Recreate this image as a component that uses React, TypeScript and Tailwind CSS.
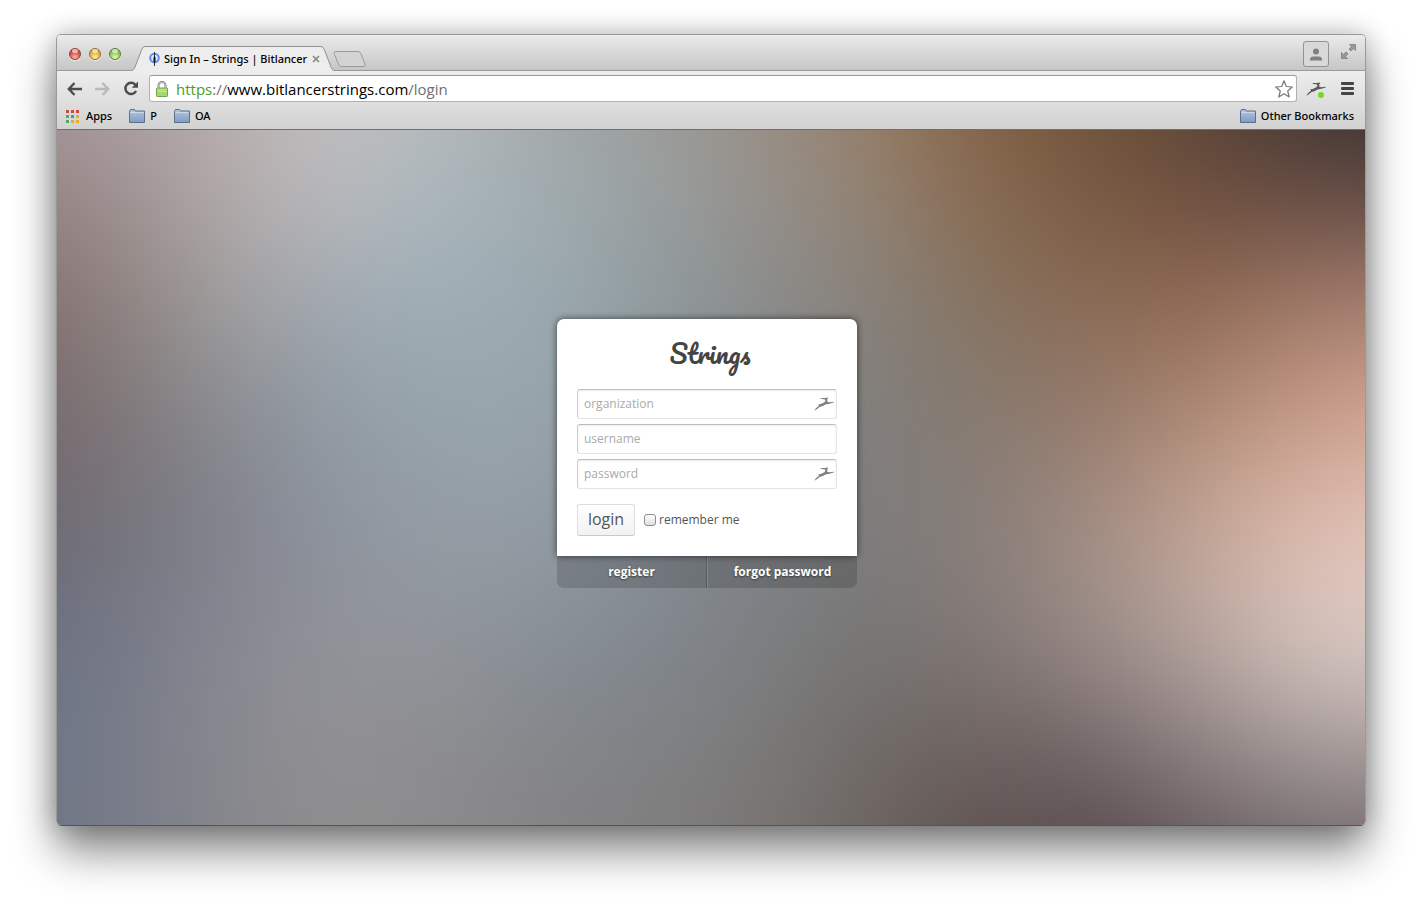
import React from "react";

const backdrop: string[][] = [
  ["#a79b9c", "#ac9fa0", "#bcb0b0", "#c2c0c1", "#b8bdbe", "#a3a8a7", "#9b9b97", "#9a8e83", "#957a62", "#815f43", "#6c5139", "#564334", "#372f30", "#302a2d"],
  ["#958284", "#9e9090", "#b2a9a9", "#bbbbbd", "#abb7bc", "#a1acb0", "#999fa0", "#95908b", "#938270", "#88694f", "#775940", "#6c4d3e", "#624a40", "#5c4643"],
  ["#826c6d", "#8b7f7c", "#9f9d9c", "#a1a9b2", "#9dadb6", "#9aa9b0", "#8f9a9e", "#898b8a", "#87817a", "#857360", "#8a6a55", "#906a54", "#a17a69", "#aa8273"],
  ["#75666a", "#7d7475", "#888a90", "#919ba4", "#97a4ab", "#98a4ab", "#8d969b", "#83878a", "#807d7b", "#867a70", "#967b6d", "#b08d77", "#cb9e8b", "#d6a999"],
  ["#6a6672", "#73727a", "#80818c", "#8d939d", "#949ca5", "#929ba3", "#888f97", "#7d8186", "#7d7c7b", "#8a7f7a", "#a38f84", "#c6a799", "#dfbfb3", "#e6c9bf"],
  ["#697084", "#747987", "#868791", "#929399", "#919499", "#868e96", "#80868d", "#7c7e80", "#757472", "#817775", "#978987", "#b4a49e", "#d4c5bf", "#dccdc8"],
  ["#6d7586", "#777b88", "#88898d", "#918f92", "#8c8c8e", "#838587", "#808182", "#7a7876", "#6e6763", "#695d5b", "#6d6163", "#857a7c", "#9c9292", "#9f9494"],
  ["#6f7485", "#747888", "#84858c", "#8d8c8c", "#8b898a", "#858184", "#807c7e", "#777370", "#6a625f", "#5a4e4e", "#524447", "#5d5155", "#675c60", "#675b5f"],
];

function Backdrop() {
  return (
    <svg className="absolute inset-0 h-full w-full" viewBox="0 0 1200 600" preserveAspectRatio="none" aria-hidden="true">
      <defs>
        <filter id="soften" filterUnits="userSpaceOnUse" x="-200" y="-200" width="1600" height="1000" colorInterpolationFilters="sRGB">
          <feGaussianBlur stdDeviation="50" />
        </filter>
      </defs>
      <g filter="url(#soften)" shapeRendering="crispEdges">
        {backdrop.map((row, r) =>
          row.map((fill, c) => {
            const left = c === 0 ? -200 : c * 100 - 100;
            const right = c === 13 ? 1400 : c * 100;
            const top = r === 0 ? -200 : r * 100 - 100;
            const bottom = r === 7 ? 800 : r * 100;
            return <rect key={`${r}-${c}`} x={left} y={top} width={right - left} height={bottom - top} fill={fill} />;
          }),
        )}
      </g>
    </svg>
  );
}

function Folder() {
  return (
    <svg width="16" height="14" viewBox="0 0 16 14" aria-hidden="true">
      <defs>
        <linearGradient id="folder" x1="0" y1="0" x2="0" y2="1">
          <stop offset="0" stopColor="#b4c7e0" />
          <stop offset="1" stopColor="#7f9cc4" />
        </linearGradient>
      </defs>
      <path d="M.5 13.5V2.2L1.5.5h4l1 1.5h9v11.5z" fill="url(#folder)" stroke="#5d6f8a" />
      <path d="M1.2 3.5h13.6" stroke="#cfdcec" strokeWidth=".9" />
    </svg>
  );
}

function Bird({ size, fill }: { size: number; fill: string }) {
  return (
    <svg width={size} height={size * 0.7} viewBox="0 0 20 14" aria-hidden="true">
      <path
        d="M.3 13.8 1.9 11.2 5.2 8.4 4.4 8 4.6 7.3 6.8 7 10.4 5.2 11.4 3.6 10.9 2.4 6.6 1.7 6.8 1 11 .9 13.6.4 14.3 1.2 13.2 2.2 13.4 4.8 15.1 5.2 19.8 4.7 19.7 5.4 15.4 6.7 11.6 7.6 8.4 9.2 5.6 10 2.5 12.4z"
        fill={fill}
      />
    </svg>
  );
}

function Lock() {
  return (
    <svg width="12" height="16" viewBox="0 0 12 16" aria-hidden="true">
      <path d="M2.5 8V4.5a3.5 3.5 0 0 1 7 0V8" fill="none" stroke="#777" strokeWidth="2" />
      <path d="M2.5 8V4.5a3.5 3.5 0 0 1 7 0V8" fill="none" stroke="#ddd" strokeWidth=".8" />
      <rect x=".5" y="7" width="11" height="8.5" rx=".8" fill="#a5d86c" stroke="#6fa548" />
      <path d="M1.5 8.5h9M1.5 10.5h9" stroke="#c4ea96" />
    </svg>
  );
}

function Apps() {
  const colors = ["#d0483c", "#d0483c", "#d0483c", "#58a55c", "#4a86e8", "#e8b020", "#58a55c", "#e8b020", "#e8b020"];
  return (
    <svg width="13" height="13" viewBox="0 0 13 13" aria-hidden="true">
      {colors.map((c, i) => (
        <rect key={i} x={(i % 3) * 5} y={Math.floor(i / 3) * 5} width="3" height="3" fill={c} />
      ))}
    </svg>
  );
}

function Field({ id, label, type, bird }: { id: string; label: string; type: string; bird?: boolean }) {
  return (
    <div className="relative">
      <input
        id={id}
        type={type}
        aria-label={label}
        placeholder={label}
        className="block h-[30px] w-full rounded-[3px] border border-[#e4e4e4] border-t-[#bdbdbd] border-l-[#cfcfcf] bg-white px-1.5 pb-0.5 text-xs text-[#555] shadow-[inset_0_1px_2px_rgba(0,0,0,0.08)] outline-none placeholder:text-[#aaa]"
      />
      {bird && (
        <span className="absolute top-2 right-[3px]">
          <Bird size={20} fill="#828282" />
        </span>
      )}
    </div>
  );
}

const lights = [
  { name: "Close", cls: "border-[#8d3f38] bg-[radial-gradient(circle_at_50%_85%,#ffb4a6_0%,#d9554a_55%,#a93a33_100%)]" },
  { name: "Minimize", cls: "border-[#93702c] bg-[radial-gradient(circle_at_50%_85%,#fff0a0_0%,#e5b03c_55%,#b5842b_100%)]" },
  { name: "Zoom", cls: "border-[#56803a] bg-[radial-gradient(circle_at_50%_85%,#e0ffb0_0%,#93c75c_55%,#5f9440_100%)]" },
];

export default function App() {
  return (
    <div className="flex min-h-screen flex-col bg-white px-14 pt-[34px] pb-[78px] font-['Open_Sans',sans-serif]">
      <div className="flex flex-1 flex-col overflow-hidden rounded-[5px] border border-[#999] border-b-[#555] shadow-[0_25px_44px_rgba(0,0,0,0.48),0_0_26px_rgba(0,0,0,0.24)]">
        <header className="font-['Noto_Sans',sans-serif] text-black">
          <div className="flex h-9 items-end border-b border-[#999] bg-linear-to-b from-[#ebebeb] to-[#c6c6c6] pl-3">
            <div className="flex gap-2 pb-2.5">
              {lights.map((l) => (
                <button key={l.name} aria-label={l.name} className={`relative size-3 rounded-full border shadow-[0_1px_0_rgba(255,255,255,0.6)] ${l.cls}`}>
                  <span className="absolute inset-x-0.5 top-0 h-1 rounded-full bg-white/60" />
                </button>
              ))}
            </div>
            <div className="-mb-px ml-2.5 flex h-[25px] items-stretch">
              <svg width="14" height="25" viewBox="0 0 14 25" aria-hidden="true">
                <path d="M0 25V24.500C2.500 24.300 3 23.500 4 21L10.500 4Q11.700.5 14 .5V25z" fill="#ededed" />
                <path d="M0 24.500C2.500 24.300 3 23.500 4 21L10.500 4Q11.700.5 14 .5" fill="none" stroke="#8f8f8f" />
              </svg>
              <div className="flex items-center gap-1 border-t border-[#8f8f8f] bg-[#ededed] pl-1">
                <svg width="11" height="14" viewBox="0 0 11 14" aria-hidden="true">
                  <circle cx="5.5" cy="6" r="4.3" fill="#dfe9fb" stroke="#5b8fe8" strokeWidth="2" />
                  <path d="M5.5 0v14" stroke="#333" strokeWidth="1" />
                  <path d="M5.5 3.5c1.5 2 1.5 5.500 0 8c-1.500-2.500-1.500-6 0-8z" fill="#111" />
                </svg>
                <span className="text-[11px] font-medium whitespace-nowrap">Sign In – Strings | Bitlancer</span>
                <button aria-label="Close tab" className="flex size-2.5 items-center justify-center">
                  <svg width="8" height="8" viewBox="0 0 8 8" aria-hidden="true"><path d="M1 1l6 6M7 1 1 7" stroke="#858585" strokeWidth="1.6" /></svg>
                </button>
              </div>
              <svg width="14" height="25" viewBox="0 0 14 25" aria-hidden="true">
                <path d="M14 25V24.500C11.500 24.300 11 23.500 10 21L3.500 4Q2.300.5 0 .5V25z" fill="#ededed" />
                <path d="M14 24.500C11.500 24.300 11 23.500 10 21L3.500 4Q2.300.5 0 .5" fill="none" stroke="#8f8f8f" />
              </svg>
            </div>
            <button aria-label="New tab" className="-ml-0.5 pb-[3px]">
              <svg width="33" height="16" viewBox="0 0 33 16" aria-hidden="true">
                <path d="M2.500.5H25q2 0 2.800 2L32 13q.8 2.500-1.500 2.500H8.500q-2 0-2.800-2L1 2.500Q.5.5 2.500.5z" fill="#d3d3d3" stroke="#999" />
              </svg>
            </button>
            <div className="ml-auto flex items-start gap-3 pr-[9px] pb-[3px]">
              <button aria-label="Profile" className="flex h-[26px] w-[26px] items-center justify-center rounded-[3px] border border-[#929292] bg-[#d9d9d9]">
                <svg width="12" height="13" viewBox="0 0 12 13" fill="#808080" aria-hidden="true">
                  <circle cx="6" cy="3.5" r="3" />
                  <path d="M0 12.500v-1.500Q0 8.500 3.500 8.500h5Q12 8.500 12 11v1.500z" />
                </svg>
              </button>
              <button aria-label="Full screen" className="pt-[3px]">
                <svg width="15" height="15" viewBox="0 0 15 15" fill="#999" stroke="#777" strokeWidth=".7" aria-hidden="true">
                  <path d="M8.500.5h6v6l-2-2L10 7 8 5l2.500-2.500zM.5 8.500v6h6l-2-2L7 10 5 8l-2.500 2.500z" />
                </svg>
              </button>
            </div>
          </div>

          <div className="border-b border-[#6f6f6f] bg-linear-to-b from-[#ededed] to-[#d2d2d2]">
            <div className="flex items-center pt-1 pr-[11px] pl-2.5">
              <nav className="flex items-center gap-[13px] text-[#4d4d4d]">
                <button aria-label="Back">
                  <svg width="15" height="14" viewBox="0 0 15 14" fill="none" stroke="currentColor" strokeWidth="2.4" aria-hidden="true"><path d="M7.500 1 1.800 7l5.700 6M2 7h13" /></svg>
                </button>
                <button aria-label="Forward" className="text-[#b9b9b9]">
                  <svg width="15" height="14" viewBox="0 0 15 14" fill="none" stroke="currentColor" strokeWidth="2.4" aria-hidden="true"><path d="M7.500 1l5.700 6-5.700 6M13 7H0" /></svg>
                </button>
                <button aria-label="Reload">
                  <svg width="16" height="15" viewBox="0 0 16 15" fill="none" aria-hidden="true">
                    <path d="M12.200 3.700A5.600 5.600 0 1 0 13 10" stroke="currentColor" strokeWidth="2.5" />
                    <path d="M15 .5v6.200H8.800z" fill="currentColor" />
                  </svg>
                </button>
              </nav>
              <div className="ml-2.5 flex h-[27px] min-w-0 flex-1 items-center rounded-[3px] border border-[#b0b0b0] border-t-[#999] bg-white pr-[3px] pl-1.5">
                <Lock />
                <div
                  role="textbox"
                  aria-label="Address"
                  contentEditable
                  suppressContentEditableWarning
                  className="ml-2 min-w-0 flex-1 truncate font-['Open_Sans',sans-serif] text-[15px] leading-5 text-[#6f6f6f] outline-none"
                >
                  <span className="text-[#4c9a1f]">https</span>://<span className="text-black">www.bitlancerstrings.com</span>/login
                </div>
                <button aria-label="Bookmark this page">
                  <svg width="18" height="18" viewBox="0 0 18 18" fill="#fff" stroke="#777" strokeWidth="1.2" strokeLinejoin="round" aria-hidden="true">
                    <path d="M9 .8l2.300 5.700 6 .5-4.600 4 1.500 6L9 13.700 3.800 17l1.500-6L.7 7l6-.5z" />
                  </svg>
                </button>
              </div>
              <button aria-label="Bird extension" className="relative ml-[9px]">
                <Bird size={20} fill="#5a5a5a" />
                <span className="absolute right-0.5 -bottom-0.5 size-1.5 rounded-full bg-[#72dc1e]" />
              </button>
              <button aria-label="Menu" className="ml-[15px]">
                <svg width="13" height="13" viewBox="0 0 13 13" fill="#444" aria-hidden="true">
                  <rect width="13" height="3" rx="1" /><rect y="5" width="13" height="3" rx="1" /><rect y="10" width="13" height="3" rx="1" />
                </svg>
              </button>
            </div>
            <nav className="flex h-[27px] items-center gap-[17px] pt-px pr-[11px] pl-[9px] text-[11px] font-medium">
              <a href="#apps" className="flex items-center gap-[7px]"><Apps />Apps</a>
              <a href="#p" className="flex items-center gap-[5px]"><Folder />P</a>
              <a href="#oa" className="flex items-center gap-[5px]"><Folder />OA</a>
              <a href="#other" className="ml-auto flex items-center gap-[5px]"><Folder />Other Bookmarks</a>
            </nav>
          </div>
        </header>

        <main className="relative flex flex-1 items-center justify-center overflow-hidden pr-2 pb-12">
          <Backdrop />
          <div className="relative w-[300px]">
            <form className="relative rounded-t-[7px] bg-white p-5 pt-4 text-[#555] shadow-[0_0_7px_rgba(0,0,0,0.6)]" onSubmit={(e) => e.preventDefault()}>
              <h1 className="mb-[18px] pl-1.5 text-center font-['Pacifico',cursive] text-[26px] leading-9 font-normal text-[#444]">Strings</h1>
              <div className="flex flex-col gap-[5px]">
                <Field id="organization" label="organization" type="text" bird />
                <Field id="username" label="username" type="text" />
                <Field id="password" label="password" type="password" bird />
              </div>
              <div className="mt-[15px] flex items-center">
                <button type="submit" className="h-8 w-[58px] rounded-[3px] border border-[#dedede] border-b-[#c8c8c8] bg-linear-to-b from-white to-[#f2f2f2] pb-0.5 text-base font-medium">login</button>
                <input id="remember" type="checkbox" className="ml-[9px] size-3 appearance-none rounded-[3px] border border-[#8f8f8f] bg-linear-to-b from-white to-[#dedede] checked:bg-[#777]" />
                <label htmlFor="remember" className="ml-[3px] text-xs">remember me</label>
              </div>
            </form>
            <nav className="flex h-8 overflow-hidden rounded-b-[7px] bg-black/15 text-xs font-bold text-white [text-shadow:0_1px_2px_rgba(0,0,0,0.5)]">
              <a href="#register" className="flex flex-1 items-center justify-center border-r border-black/20">register</a>
              <a href="#forgot" className="flex flex-1 items-center justify-center border-l border-white/15">forgot password</a>
            </nav>
          </div>
        </main>
      </div>
    </div>
  );
}
